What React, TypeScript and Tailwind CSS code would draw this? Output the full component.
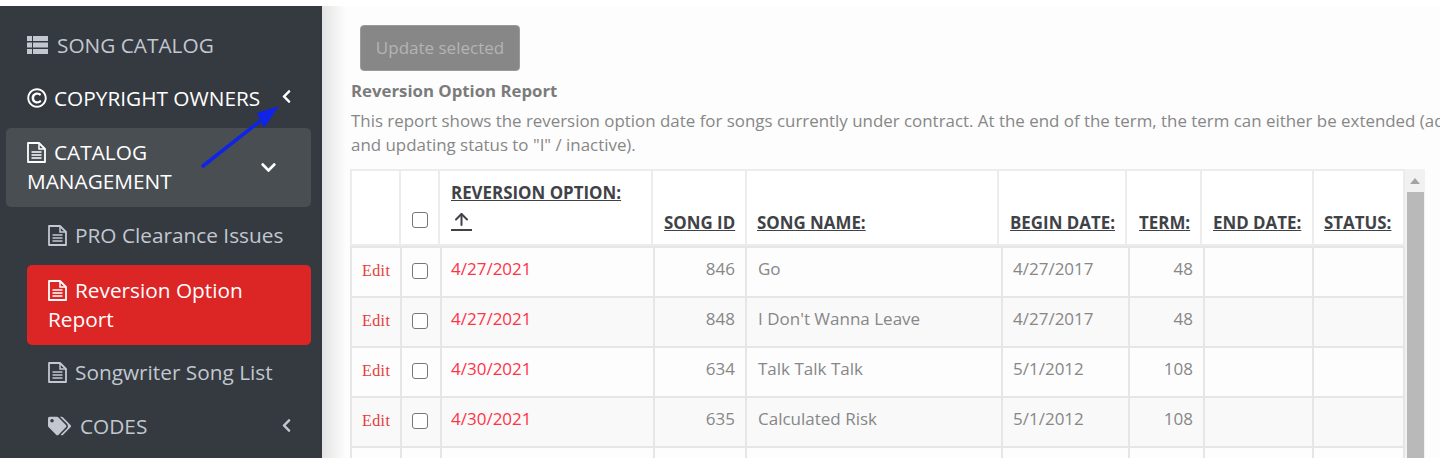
import { ArrowUp } from "lucide-react";
import {
  FaChevronDown,
  FaChevronLeft,
  FaRegCopyright,
  FaTags
} from "react-icons/fa";

const rows = [
  { option: "4/27/2021", id: 846, name: "Go", begin: "4/27/2017", term: 48 },
  { option: "4/27/2021", id: 848, name: "I Don't Wanna Leave", begin: "4/27/2017", term: 48 },
  { option: "4/30/2021", id: 634, name: "Talk Talk Talk", begin: "5/1/2012", term: 108 },
  { option: "4/30/2021", id: 635, name: "Calculated Risk", begin: "5/1/2012", term: 108 },
  { option: "", id: "", name: "", begin: "", term: "" }
];

const headClass =
  "border-2 border-[#ececec] pr-[8px] pb-[9px] align-bottom text-left text-[16.9px] leading-[24px] font-bold text-[#3f4347]";
const cellClass = "border-2 border-[#e6e6e6] px-[10px] pb-[6px] align-middle text-[17px]";

// wide document outline with folded corner
function FileIcon({ className }: { className: string }) {
  return (
    <svg viewBox="0 0 19 21" className={className} fill="none" stroke="currentColor">
      <path d="M1 1 H12 L18 7 V20 H1 Z" strokeWidth="1.8" strokeLinejoin="round" />
      <path d="M12 1 V7 H18" strokeWidth="1.5" />
      <path d="M4.5 10 H14.5 M4.5 13 H14.5 M4.5 16 H14.5" strokeWidth="1.6" />
    </svg>
  );
}

function ListIcon({ className }: { className: string }) {
  return (
    <svg viewBox="0 0 21 18" className={className} fill="currentColor">
      <path d="M0 0h5v5H0zM6 0h15v5H6zM0 6.500h5v5H0zM6 6.500h15v5H6zM0 13h5v5H0zM6 13h15v5H6z" />
    </svg>
  );
}

export default function App() {
  return (
    <div className="relative flex h-[458px] w-[1440px] overflow-hidden bg-white pt-[6px] font-['Open_Sans',sans-serif]">
      <aside className="h-[452px] w-[322px] shrink-0 bg-[#343a40] pt-[16px] text-[20.8px] leading-[29px] text-[#c2c7d0]">
        <a className="flex h-[46px] items-center gap-[9px] pl-[27px]">
          <ListIcon className="h-[18px] w-[21px]" />
          SONG CATALOG
        </a>
        <a className="mt-[7px] flex h-[46px] items-center gap-[7px] pl-[27px] text-white">
          <FaRegCopyright className="h-[20px] w-[20px]" />
          COPYRIGHT OWNERS
          <FaChevronLeft className="mb-[4px] ml-[12px] h-[15px] w-[15px]" />
        </a>
        <a className="mt-[7px] mr-[11px] ml-[6px] flex h-[79px] items-center justify-between rounded-[5px] bg-[#494e53] pr-[34px] pl-[21px] text-white">
          <span className="mb-[2px] w-[190px]">
            <FileIcon className="mr-[8px] inline h-[21px] w-[19px] align-[-3px]" />
            CATALOG MANAGEMENT
          </span>
          <FaChevronDown className="h-[17px] w-[17px]" />
        </a>
        <a className="mt-[6px] flex h-[46px] items-center gap-[8px] pb-[2px] pl-[48px]">
          <FileIcon className="h-[21px] w-[19px]" />
          PRO Clearance Issues
        </a>
        <a className="mt-[6px] mr-[11px] ml-[27px] flex h-[80px] items-center rounded-[5px] bg-[#dc2626] pl-[21px] text-white">
          <span className="w-[220px]">
            <FileIcon className="mr-[8px] inline h-[21px] w-[19px] align-[-3px]" />
            Reversion Option Report
          </span>
        </a>
        <a className="mt-[4px] flex h-[46px] items-center gap-[8px] pl-[48px]">
          <FileIcon className="h-[21px] w-[19px]" />
          Songwriter Song List
        </a>
        <a className="mt-[8px] flex h-[46px] items-center pr-[28px] pl-[48px]">
          <FaTags className="mr-[9px] h-[20px] w-[23px]" />
          CODES
          <FaChevronLeft className="mb-[2px] ml-auto h-[15px] w-[15px]" />
        </a>
      </aside>

      <main className="min-w-0 flex-1 bg-[#fdfdfd] bg-gradient-to-r from-[#e4e4e4] from-0% to-[#fdfdfd] to-[24px] bg-no-repeat pl-[29px] text-[#878787]">
        <button className="mt-[19px] ml-[9px] block h-[46px] w-[160px] rounded-[4px] border border-[#9a9a9a] bg-[#878787] text-center text-[17px] text-[#b4b4b4]">
          Update selected
        </button>
        <h2 className="mt-[8px] text-[16.8px] leading-[24px] font-bold text-[#7b7b7b]">
          Reversion Option Report
        </h2>
        <p className="mt-[6px] w-[1200px] text-[16.9px] leading-[24px]">
          This report shows the reversion option date for songs currently under contract. At the end of the term, the term can either be extended (add
          <br />
          and updating status to "I" / inactive).
        </p>

        <div className="relative mt-[12px] -ml-[1px] w-[1075px]">
          <table className="w-[1053px] table-fixed border-collapse bg-white">
            <colgroup>
              <col className="w-[49px]" />
              <col className="w-[39px]" />
              <col className="w-[213px]" />
              <col className="w-[94px]" />
              <col className="w-[252px]" />
              <col className="w-[128px]" />
              <col className="w-[75px]" />
              <col className="w-[112px]" />
              <col className="w-[91px]" />
            </colgroup>
            <thead>
              <tr className="h-[75px]">
                <th className={headClass}></th>
                <th className="border-2 border-[#ececec] pb-[16px] align-bottom">
                  <input type="checkbox" className="mx-auto block h-[16px] w-[16px] appearance-none rounded-[3px] border border-[#777] bg-white" />
                </th>
                <th className={`${headClass} pb-[13px] pl-[11px]`}>
                  <span className="block leading-[32px] underline">REVERSION OPTION:</span>
                  <ArrowUp className="mt-[1px] block h-[21px] w-[21px] border-b-2 border-[#3f4347]" strokeWidth={2.5} />
                </th>
                <th className={`${headClass} pl-[11px]`}><span className="underline">SONG ID</span></th>
                <th className={`${headClass} pl-[10px]`}><span className="underline">SONG NAME:</span></th>
                <th className={`${headClass} pl-[11px]`}><span className="underline">BEGIN DATE:</span></th>
                <th className={`${headClass} pl-[12px]`}><span className="underline">TERM:</span></th>
                <th className={`${headClass} pl-[11px]`}><span className="underline">END DATE:</span></th>
                <th className={`${headClass} pl-[10px]`}><span className="underline">STATUS:</span></th>
              </tr>
            </thead>
          </table>
          <table className="w-[1053px] table-fixed border-collapse">
            <colgroup>
              <col className="w-[50px]" />
              <col className="w-[40px]" />
              <col className="w-[213px]" />
              <col className="w-[92px]" />
              <col className="w-[256px]" />
              <col className="w-[127px]" />
              <col className="w-[75px]" />
              <col className="w-[109px]" />
              <col className="w-[91px]" />
            </colgroup>
            <tbody>
              {rows.map((row, i) => (
                <tr key={i} className={`h-[50px] ${i % 2 === 1 ? "bg-[#f9f9f9]" : "bg-[#fdfdfd]"}`}>
                  <td className="border-2 border-[#e6e6e6] pb-[3px] pl-[10px] font-['Liberation_Serif',serif] text-[16px] text-[#e53b3b]">
                    {row.id !== "" && <span className="tracking-[0.4px]">Edit</span>}
                  </td>
                  <td className="border-2 border-[#e6e6e6] pb-[3px] align-middle">
                    {row.id !== "" && (
                      <input type="checkbox" className="mr-auto ml-[10px] block h-[16px] w-[16px] appearance-none rounded-[3px] border border-[#777] bg-white" />
                    )}
                  </td>
                  <td className={`${cellClass} pl-[9px] text-[#ff3347]`}>{row.option}</td>
                  <td className={`${cellClass} text-right`}>{row.id}</td>
                  <td className={`${cellClass} pl-[11px]`}>{row.name}</td>
                  <td className={cellClass}>{row.begin}</td>
                  <td className={`${cellClass} text-right`}>{row.term}</td>
                  <td className={cellClass}></td>
                  <td className={cellClass}></td>
                </tr>
              ))}
            </tbody>
          </table>

          {/* scrollbar sits over the table's right edge */}
          <div className="absolute top-0 left-[1055px] flex h-[300px] w-[20px] flex-col items-center bg-[#f1f1f1] pt-[1px]">
            <svg viewBox="0 0 10 6" className="mt-[8px] h-[6px] w-[10px] fill-[#a3a3a3]">
              <path d="M5 0 L10 6 L0 6 Z" />
            </svg>
            <div className="mt-[8px] h-[280px] w-[17px] bg-[#b9b9b9]"></div>
          </div>
        </div>
      </main>

      {/* annotation arrow drawn over the sidebar */}
      <svg className="absolute top-0 left-0 h-[458px] w-[322px]" viewBox="0 0 322 458">
        <path d="M203 166 L264 118" stroke="#0f24e6" strokeWidth="3.5" strokeLinecap="round" fill="none" />
        <path d="M279 106 L257 113 L264 128 Z" fill="#0f24e6" />
      </svg>
    </div>
  );
}
